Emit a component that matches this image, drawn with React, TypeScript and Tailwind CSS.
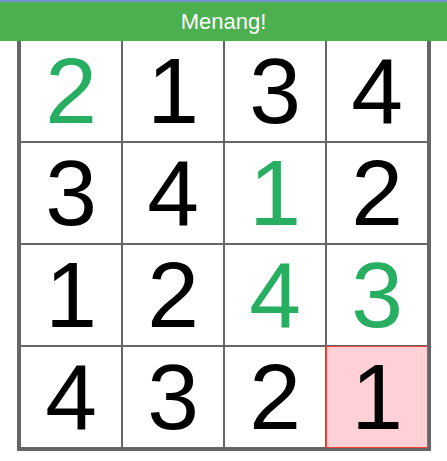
import React from 'react';

const board = [
  [2, 1, 3, 4],
  [3, 4, 1, 2],
  [1, 2, 4, 3],
  [4, 3, 2, 1],
];

// cells that were given at the start (shown green)
const fixed = ['0-0', '1-2', '2-2', '2-3'];

const App: React.FC = () => {
  return (
    <div className="min-h-screen w-[447px] bg-white font-['Liberation_Sans',Arial,sans-serif]">
      {/* Header */}
      <div className="relative z-10">
        <div className="h-[2px] bg-[#7393d4]" />
        <div className="flex h-[39px] items-center justify-center bg-[#4caf50] text-[22px] text-white">
          Menang!
        </div>
      </div>

      {/* Board */}
      <div className="-mt-px ml-[17px] w-[414px] border-x-[3px] border-b-[3px] border-[#666666]">
        {board.map((row, r) => (
          <div key={r} className="flex">
            {row.map((n, c) => {
              const key = `${r}-${c}`;
              const isFixed = fixed.includes(key);
              const isError = r === 3 && c === 3;
              return (
                <div
                  key={key}
                  className={
                    isError
                      ? 'flex h-[102px] w-[102px] items-center justify-center border border-[#f44336] bg-[#ffd1d6] text-[93px] leading-none text-black'
                      : `flex h-[102px] w-[102px] items-center justify-center border border-[#666666] text-[93px] leading-none ${
                          isFixed ? 'text-[#27ae60]' : 'text-black'
                        }`
                  }
                >
                  {n}
                </div>
              );
            })}
          </div>
        ))}
      </div>
    </div>
  );
};

export default App;
